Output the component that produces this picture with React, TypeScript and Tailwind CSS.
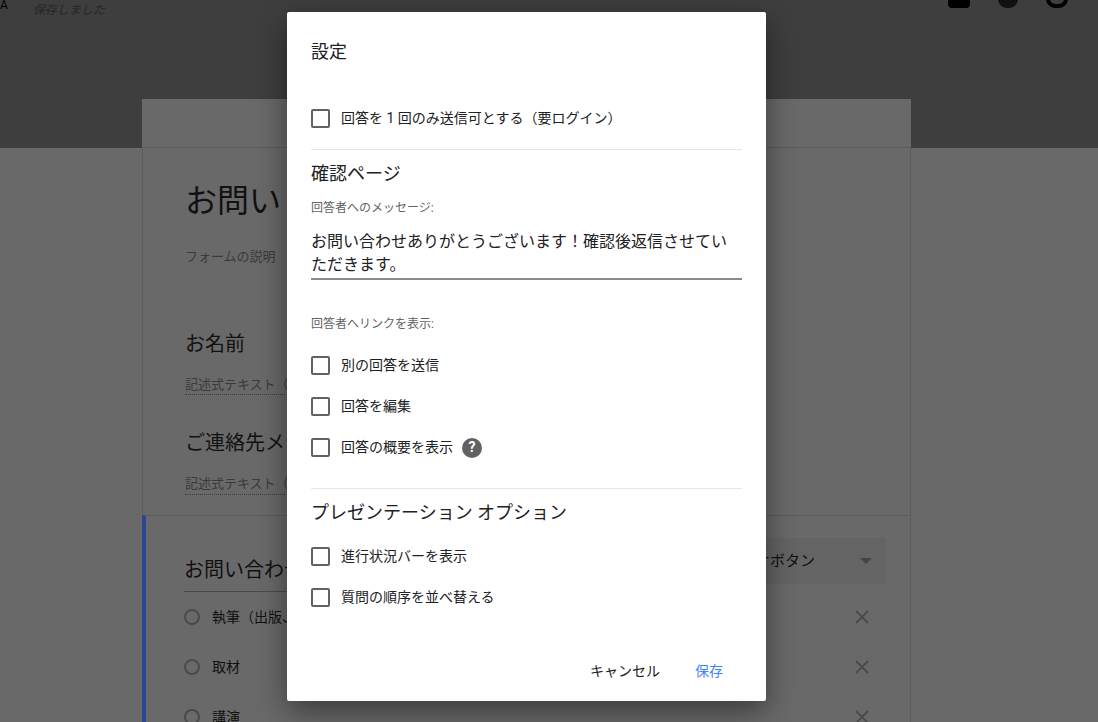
import React from 'react';

const font = { fontFamily: 'Roboto, "Noto Sans CJK JP", sans-serif' };

const Check = ({ label, help }: { label: string; help?: boolean }) => (
  <div className="flex items-center h-[41px]">
    <div className="w-[19px] h-[19px] border-2 border-[#5f6368] rounded-[2px]" />
    <span className="ml-[11px] text-[14px] text-[#202124]">{label}</span>
    {help && (
      <span className="ml-[9px] w-[20px] h-[20px] rounded-full bg-[#616161] text-white text-[14px] font-bold flex items-center justify-center">
        ?
      </span>
    )}
  </div>
);

const X = () => (
  <svg width="16" height="16" viewBox="0 0 16 16" className="text-[#4a4a4a]">
    <path d="M2 2 L14 14 M14 2 L2 14" stroke="currentColor" strokeWidth="1.8" />
  </svg>
);

export default function App() {
  return (
    <div className="relative w-[1098px] h-[722px] overflow-hidden bg-[#696969]" style={font}>
      {/* 背景ページ（暗転済み） */}
      <div className="h-[148px] bg-[#3e3e3e] relative">
        <span className="absolute left-0 top-[-4px] text-[12px] text-black">A</span>
        <span className="absolute left-[33px] top-[1px] text-[12px] italic text-[#262626]">保存しました</span>
        <div className="absolute right-[30px] top-[-10px] flex gap-[28px]">
          <div className="w-[22px] h-[18px] rounded bg-black" />
          <div className="w-[20px] h-[18px] rounded-full bg-[#111]" />
          <div className="w-[22px] h-[18px] rounded-full border-[4px] border-black" />
        </div>
      </div>
      <div className="absolute left-[142px] top-[99px] w-[769px] bg-[#696969]">
        <div className="h-[49px] border-b border-[#5c5c5c]" />
        <div className="border-x border-[#5c5c5c] pl-[42px] pt-[33px] h-[367px] text-[#111]">
          <div className="text-[32px] leading-[40px]">お問い</div>
          <div className="text-[13px] text-[#3a3a3a] mt-[26px]">フォームの説明</div>
          <div className="text-[20px] mt-[62px]">お名前</div>
          <div className="text-[13px] text-[#3a3a3a] mt-[16px] border-b border-dotted border-[#3a3a3a] w-[100px] whitespace-nowrap">記述式テキスト（</div>
          <div className="text-[20px] mt-[33px]">ご連絡先メ</div>
          <div className="text-[13px] text-[#3a3a3a] mt-[16px] border-b border-dotted border-[#3a3a3a] w-[100px] whitespace-nowrap">記述式テキスト（</div>
        </div>
        <div className="border-l-[4px] border-[#2c4790] border-r border-r-[#5c5c5c] border-t border-t-[#5c5c5c] h-[220px] pl-[38px] pr-[24px] pt-[23px] relative">
          <div className="text-[20px] text-[#111] border-b border-[#4a4a4a] w-[150px] pb-[6px] mt-[16px]">お問い合わせ</div>
          <div className="absolute left-[580px] top-[22px] w-[160px] h-[46px] bg-[#646464] rounded flex items-center justify-between px-[14px]">
            <span className="text-[15px] text-[#111]">ジオボタン</span>
            <span className="w-0 h-0 border-x-[6px] border-x-transparent border-t-[6px] border-t-[#444]" />
          </div>
          {['執筆（出版、', '取材', '講演'].map((t) => (
            <div key={t} className="flex items-center h-[50px] first:mt-[8px]">
              <div className="w-[16px] h-[16px] rounded-full border-2 border-[#4a4a4a]" />
              <span className="ml-[12px] text-[14px] text-[#111]">{t}</span>
              <div className="ml-auto mr-[16px]"><X /></div>
            </div>
          ))}
        </div>
      </div>

      {/* 設定ダイアログ */}
      <div className="absolute left-[287px] top-[12px] w-[479px] h-[689px] bg-white rounded-[2px] shadow-[0_10px_30px_rgba(0,0,0,0.45)] px-[24px]">
        <div className="text-[18px] text-[#202124] pt-[26px] h-[86px]">設定</div>
        <Check label="回答を 1 回のみ送信可とする（要ログイン）" />
        <div className="border-t border-[#e6e6e6] mt-[10px]" />
        <div className="text-[18px] text-[#202124] mt-[11px] leading-[26px]">確認ページ</div>
        <div className="text-[12px] text-[#5f6368] mt-[12px]">回答者へのメッセージ:</div>
        <div className="text-[16px] text-[#202124] leading-[23px] mt-[13px] pb-[2px] border-b-2 border-[#8a8a8a]">
          お問い合わせありがとうございます！確認後返信させていただきます。
        </div>
        <div className="text-[12px] text-[#5f6368] mt-[35px]">回答者へリンクを表示:</div>
        <div className="mt-[12px]">
          <Check label="別の回答を送信" />
          <Check label="回答を編集" />
          <Check label="回答の概要を表示" help />
        </div>
        <div className="border-t border-[#e6e6e6] mt-[20px]" />
        <div className="text-[18px] text-[#202124] mt-[11px] leading-[26px]">プレゼンテーション オプション</div>
        <div className="mt-[10px]">
          <Check label="進行状況バーを表示" />
          <Check label="質問の順序を並べ替える" />
        </div>
        <div className="flex justify-end items-center gap-[35px] mt-[43px] pr-[19px] text-[14px]">
          <span className="text-[#202124]">キャンセル</span>
          <span className="text-[#4285f4]">保存</span>
        </div>
      </div>
    </div>
  );
}
